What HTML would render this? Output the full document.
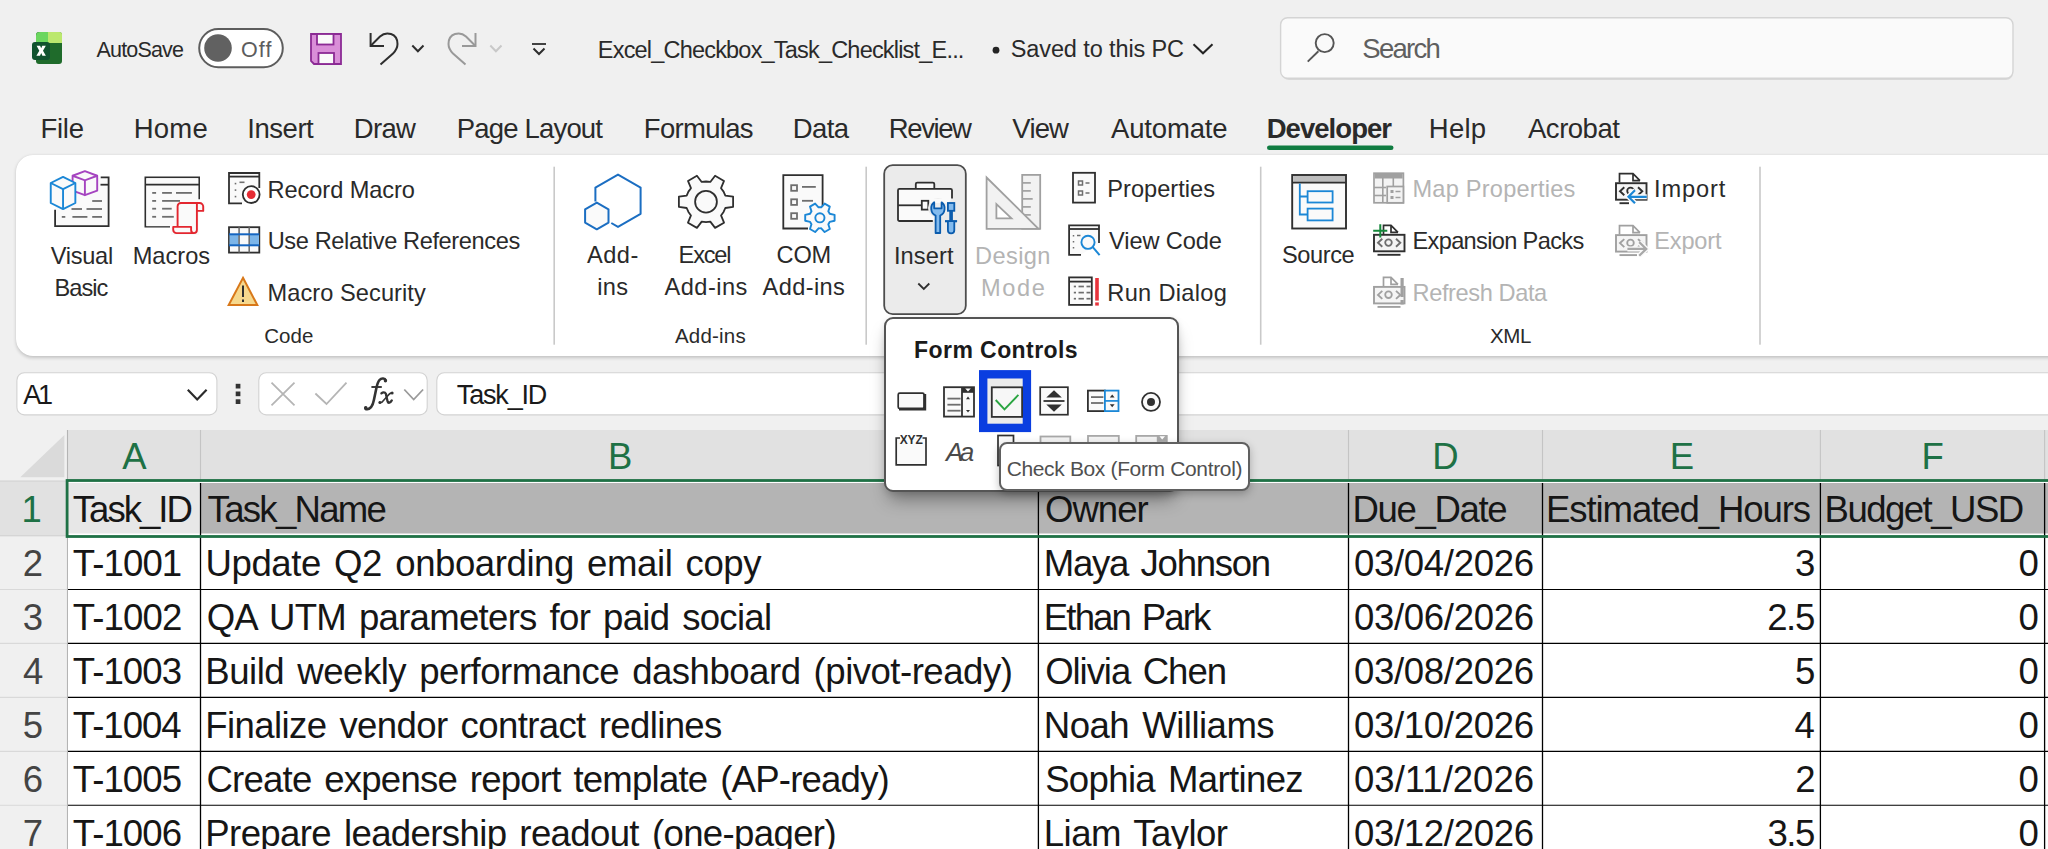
<!DOCTYPE html><html><head><meta charset="utf-8"><style>
html,body{margin:0;padding:0;width:2048px;height:849px;overflow:hidden;background:#f0f0f0;}
.t{position:absolute;white-space:nowrap;}
.a{position:absolute;}
svg{position:absolute;left:0;top:0;}
</style></head><body>
<svg width="2048" height="849" viewBox="0 0 2048 849"><rect x="67.4" y="430" width="2000" height="51" fill="#e1e1e1"/><polygon points="64.4,435 64.4,477.3 20.3,477.3" fill="#dadada"/><rect x="0" y="481" width="67.4" height="55" fill="#e1e1e1"/><line x1="0" y1="589.5" x2="67" y2="589.5" stroke="#d9d9d9" stroke-width="1.1"/><line x1="0" y1="643.4" x2="67" y2="643.4" stroke="#d9d9d9" stroke-width="1.1"/><line x1="0" y1="697.4" x2="67" y2="697.4" stroke="#d9d9d9" stroke-width="1.1"/><line x1="0" y1="751.4" x2="67" y2="751.4" stroke="#d9d9d9" stroke-width="1.1"/><line x1="0" y1="805.3" x2="67" y2="805.3" stroke="#d9d9d9" stroke-width="1.1"/><line x1="0" y1="481" x2="67" y2="481" stroke="#d0d0d0" stroke-width="1"/><line x1="0" y1="535.8" x2="67" y2="535.8" stroke="#d0d0d0" stroke-width="1"/><line x1="67.5" y1="430" x2="67.5" y2="849" stroke="#b4b4b4" stroke-width="1.1"/><rect x="68" y="481" width="1990" height="370" fill="#ffffff"/><rect x="68" y="483" width="131.5" height="50.5" fill="#e7e7e7"/><rect x="201" y="483" width="1900" height="50.5" fill="#b4b4b4"/><line x1="200.5" y1="430" x2="200.5" y2="480" stroke="#c4c4c4" stroke-width="1.1"/><line x1="1038.4" y1="430" x2="1038.4" y2="480" stroke="#c4c4c4" stroke-width="1.1"/><line x1="1348.5" y1="430" x2="1348.5" y2="480" stroke="#c4c4c4" stroke-width="1.1"/><line x1="1542.5" y1="430" x2="1542.5" y2="480" stroke="#c4c4c4" stroke-width="1.1"/><line x1="1820.4" y1="430" x2="1820.4" y2="480" stroke="#c4c4c4" stroke-width="1.1"/><line x1="2044.6" y1="430" x2="2044.6" y2="480" stroke="#c4c4c4" stroke-width="1.1"/><line x1="200.5" y1="483" x2="200.5" y2="849" stroke="#000" stroke-width="1.3"/><line x1="1038.4" y1="483" x2="1038.4" y2="849" stroke="#000" stroke-width="1.3"/><line x1="1348.5" y1="483" x2="1348.5" y2="849" stroke="#000" stroke-width="1.3"/><line x1="1542.5" y1="483" x2="1542.5" y2="849" stroke="#000" stroke-width="1.3"/><line x1="1820.4" y1="483" x2="1820.4" y2="849" stroke="#000" stroke-width="1.3"/><line x1="2044.6" y1="483" x2="2044.6" y2="849" stroke="#000" stroke-width="1.3"/><line x1="68" y1="589.5" x2="2048" y2="589.5" stroke="#000" stroke-width="1.1"/><line x1="68" y1="643.4" x2="2048" y2="643.4" stroke="#000" stroke-width="1.1"/><line x1="68" y1="697.4" x2="2048" y2="697.4" stroke="#000" stroke-width="1.1"/><line x1="68" y1="751.4" x2="2048" y2="751.4" stroke="#000" stroke-width="1.1"/><line x1="68" y1="805.3" x2="2048" y2="805.3" stroke="#000" stroke-width="1.1"/><rect x="67.1" y="480.5" width="2000" height="56" fill="none" stroke="#1e7145" stroke-width="2.8"/></svg>
<div class="t" style="left:122.36px;top:438.70px;font-size:36.50px;line-height:36.50px;letter-spacing:0.000px;color:#1e7145;font-weight:normal;font-style:normal;font-family:'Liberation Sans', sans-serif;word-spacing:0.00px;">A</div>
<div class="t" style="left:607.92px;top:438.70px;font-size:36.50px;line-height:36.50px;letter-spacing:0.000px;color:#1e7145;font-weight:normal;font-style:normal;font-family:'Liberation Sans', sans-serif;word-spacing:0.00px;">B</div>
<div class="t" style="left:1180.09px;top:438.70px;font-size:36.50px;line-height:36.50px;letter-spacing:0.000px;color:#1e7145;font-weight:normal;font-style:normal;font-family:'Liberation Sans', sans-serif;word-spacing:0.00px;">C</div>
<div class="t" style="left:1432.22px;top:438.70px;font-size:36.50px;line-height:36.50px;letter-spacing:0.000px;color:#1e7145;font-weight:normal;font-style:normal;font-family:'Liberation Sans', sans-serif;word-spacing:0.00px;">D</div>
<div class="t" style="left:1669.63px;top:438.70px;font-size:36.50px;line-height:36.50px;letter-spacing:0.000px;color:#1e7145;font-weight:normal;font-style:normal;font-family:'Liberation Sans', sans-serif;word-spacing:0.00px;">E</div>
<div class="t" style="left:1921.44px;top:438.70px;font-size:36.50px;line-height:36.50px;letter-spacing:0.000px;color:#1e7145;font-weight:normal;font-style:normal;font-family:'Liberation Sans', sans-serif;word-spacing:0.00px;">F</div>
<div class="t" style="left:21.42px;top:492.40px;font-size:36.50px;line-height:36.50px;letter-spacing:0.000px;color:#1e7145;font-weight:normal;font-style:normal;font-family:'Liberation Sans', sans-serif;word-spacing:0.00px;">1</div>
<div class="t" style="left:22.87px;top:546.10px;font-size:36.50px;line-height:36.50px;letter-spacing:0.000px;color:#444444;font-weight:normal;font-style:normal;font-family:'Liberation Sans', sans-serif;word-spacing:0.00px;">2</div>
<div class="t" style="left:22.87px;top:600.06px;font-size:36.50px;line-height:36.50px;letter-spacing:0.000px;color:#444444;font-weight:normal;font-style:normal;font-family:'Liberation Sans', sans-serif;word-spacing:0.00px;">3</div>
<div class="t" style="left:23.05px;top:654.02px;font-size:36.50px;line-height:36.50px;letter-spacing:0.000px;color:#444444;font-weight:normal;font-style:normal;font-family:'Liberation Sans', sans-serif;word-spacing:0.00px;">4</div>
<div class="t" style="left:22.87px;top:707.98px;font-size:36.50px;line-height:36.50px;letter-spacing:0.000px;color:#444444;font-weight:normal;font-style:normal;font-family:'Liberation Sans', sans-serif;word-spacing:0.00px;">5</div>
<div class="t" style="left:22.69px;top:761.94px;font-size:36.50px;line-height:36.50px;letter-spacing:0.000px;color:#444444;font-weight:normal;font-style:normal;font-family:'Liberation Sans', sans-serif;word-spacing:0.00px;">6</div>
<div class="t" style="left:22.87px;top:815.90px;font-size:36.50px;line-height:36.50px;letter-spacing:0.000px;color:#444444;font-weight:normal;font-style:normal;font-family:'Liberation Sans', sans-serif;word-spacing:0.00px;">7</div>
<div class="t" style="left:72.87px;top:492.32px;font-size:36.60px;line-height:36.60px;letter-spacing:-2.025px;color:#161616;font-weight:normal;font-style:normal;font-family:'Liberation Sans', sans-serif;word-spacing:0.00px;">Task_ID</div>
<div class="t" style="left:207.57px;top:492.32px;font-size:36.60px;line-height:36.60px;letter-spacing:-1.721px;color:#161616;font-weight:normal;font-style:normal;font-family:'Liberation Sans', sans-serif;word-spacing:0.00px;">Task_Name</div>
<div class="t" style="left:1044.95px;top:492.32px;font-size:36.60px;line-height:36.60px;letter-spacing:-1.002px;color:#161616;font-weight:normal;font-style:normal;font-family:'Liberation Sans', sans-serif;word-spacing:0.00px;">Owner</div>
<div class="t" style="left:1352.57px;top:492.32px;font-size:36.60px;line-height:36.60px;letter-spacing:-1.375px;color:#161616;font-weight:normal;font-style:normal;font-family:'Liberation Sans', sans-serif;word-spacing:0.00px;">Due_Date</div>
<div class="t" style="left:1546.07px;top:492.32px;font-size:36.60px;line-height:36.60px;letter-spacing:-1.115px;color:#161616;font-weight:normal;font-style:normal;font-family:'Liberation Sans', sans-serif;word-spacing:0.00px;">Estimated_Hours</div>
<div class="t" style="left:1824.57px;top:492.32px;font-size:36.60px;line-height:36.60px;letter-spacing:-1.543px;color:#161616;font-weight:normal;font-style:normal;font-family:'Liberation Sans', sans-serif;word-spacing:0.00px;">Budget_USD</div>
<div class="t" style="left:72.87px;top:546.02px;font-size:36.60px;line-height:36.60px;letter-spacing:-0.909px;color:#161616;font-weight:normal;font-style:normal;font-family:'Liberation Sans', sans-serif;word-spacing:0.00px;">T-1001</div>
<div class="t" style="left:205.56px;top:546.02px;font-size:36.60px;line-height:36.60px;letter-spacing:-0.439px;color:#161616;font-weight:normal;font-style:normal;font-family:'Liberation Sans', sans-serif;word-spacing:3.50px;">Update Q2 onboarding email copy</div>
<div class="t" style="left:1043.87px;top:546.02px;font-size:36.60px;line-height:36.60px;letter-spacing:-1.280px;color:#161616;font-weight:normal;font-style:normal;font-family:'Liberation Sans', sans-serif;word-spacing:3.50px;">Maya Johnson</div>
<div class="t" style="left:1354.04px;top:546.02px;font-size:36.60px;line-height:36.60px;letter-spacing:-0.339px;color:#161616;font-weight:normal;font-style:normal;font-family:'Liberation Sans', sans-serif;word-spacing:0.00px;">03/04/2026</div>
<div class="t" style="left:1794.95px;top:546.02px;font-size:36.60px;line-height:36.60px;letter-spacing:0.000px;color:#161616;font-weight:normal;font-style:normal;font-family:'Liberation Sans', sans-serif;word-spacing:0.00px;">3</div>
<div class="t" style="left:2018.47px;top:546.02px;font-size:36.60px;line-height:36.60px;letter-spacing:0.000px;color:#161616;font-weight:normal;font-style:normal;font-family:'Liberation Sans', sans-serif;word-spacing:0.00px;">0</div>
<div class="t" style="left:72.87px;top:599.98px;font-size:36.60px;line-height:36.60px;letter-spacing:-0.873px;color:#161616;font-weight:normal;font-style:normal;font-family:'Liberation Sans', sans-serif;word-spacing:0.00px;">T-1002</div>
<div class="t" style="left:206.65px;top:599.98px;font-size:36.60px;line-height:36.60px;letter-spacing:-0.728px;color:#161616;font-weight:normal;font-style:normal;font-family:'Liberation Sans', sans-serif;word-spacing:3.50px;">QA UTM parameters for paid social</div>
<div class="t" style="left:1043.87px;top:599.98px;font-size:36.60px;line-height:36.60px;letter-spacing:-1.884px;color:#161616;font-weight:normal;font-style:normal;font-family:'Liberation Sans', sans-serif;word-spacing:3.50px;">Ethan Park</div>
<div class="t" style="left:1354.04px;top:599.98px;font-size:36.60px;line-height:36.60px;letter-spacing:-0.339px;color:#161616;font-weight:normal;font-style:normal;font-family:'Liberation Sans', sans-serif;word-spacing:0.00px;">03/06/2026</div>
<div class="t" style="left:1767.17px;top:599.98px;font-size:36.60px;line-height:36.60px;letter-spacing:-1.390px;color:#161616;font-weight:normal;font-style:normal;font-family:'Liberation Sans', sans-serif;word-spacing:0.00px;">2.5</div>
<div class="t" style="left:2018.47px;top:599.98px;font-size:36.60px;line-height:36.60px;letter-spacing:0.000px;color:#161616;font-weight:normal;font-style:normal;font-family:'Liberation Sans', sans-serif;word-spacing:0.00px;">0</div>
<div class="t" style="left:72.87px;top:653.94px;font-size:36.60px;line-height:36.60px;letter-spacing:-0.946px;color:#161616;font-weight:normal;font-style:normal;font-family:'Liberation Sans', sans-serif;word-spacing:0.00px;">T-1003</div>
<div class="t" style="left:205.37px;top:653.94px;font-size:36.60px;line-height:36.60px;letter-spacing:-0.507px;color:#161616;font-weight:normal;font-style:normal;font-family:'Liberation Sans', sans-serif;word-spacing:3.50px;">Build weekly performance dashboard (pivot-ready)</div>
<div class="t" style="left:1045.15px;top:653.94px;font-size:36.60px;line-height:36.60px;letter-spacing:-1.070px;color:#161616;font-weight:normal;font-style:normal;font-family:'Liberation Sans', sans-serif;word-spacing:3.50px;">Olivia Chen</div>
<div class="t" style="left:1354.04px;top:653.94px;font-size:36.60px;line-height:36.60px;letter-spacing:-0.339px;color:#161616;font-weight:normal;font-style:normal;font-family:'Liberation Sans', sans-serif;word-spacing:0.00px;">03/08/2026</div>
<div class="t" style="left:1794.95px;top:653.94px;font-size:36.60px;line-height:36.60px;letter-spacing:0.000px;color:#161616;font-weight:normal;font-style:normal;font-family:'Liberation Sans', sans-serif;word-spacing:0.00px;">5</div>
<div class="t" style="left:2018.47px;top:653.94px;font-size:36.60px;line-height:36.60px;letter-spacing:0.000px;color:#161616;font-weight:normal;font-style:normal;font-family:'Liberation Sans', sans-serif;word-spacing:0.00px;">0</div>
<div class="t" style="left:72.87px;top:707.90px;font-size:36.60px;line-height:36.60px;letter-spacing:-1.019px;color:#161616;font-weight:normal;font-style:normal;font-family:'Liberation Sans', sans-serif;word-spacing:0.00px;">T-1004</div>
<div class="t" style="left:205.37px;top:707.90px;font-size:36.60px;line-height:36.60px;letter-spacing:-0.627px;color:#161616;font-weight:normal;font-style:normal;font-family:'Liberation Sans', sans-serif;word-spacing:3.50px;">Finalize vendor contract redlines</div>
<div class="t" style="left:1043.87px;top:707.90px;font-size:36.60px;line-height:36.60px;letter-spacing:-0.539px;color:#161616;font-weight:normal;font-style:normal;font-family:'Liberation Sans', sans-serif;word-spacing:3.50px;">Noah Williams</div>
<div class="t" style="left:1354.04px;top:707.90px;font-size:36.60px;line-height:36.60px;letter-spacing:-0.339px;color:#161616;font-weight:normal;font-style:normal;font-family:'Liberation Sans', sans-serif;word-spacing:0.00px;">03/10/2026</div>
<div class="t" style="left:1794.59px;top:707.90px;font-size:36.60px;line-height:36.60px;letter-spacing:0.000px;color:#161616;font-weight:normal;font-style:normal;font-family:'Liberation Sans', sans-serif;word-spacing:0.00px;">4</div>
<div class="t" style="left:2018.47px;top:707.90px;font-size:36.60px;line-height:36.60px;letter-spacing:0.000px;color:#161616;font-weight:normal;font-style:normal;font-family:'Liberation Sans', sans-serif;word-spacing:0.00px;">0</div>
<div class="t" style="left:72.87px;top:761.86px;font-size:36.60px;line-height:36.60px;letter-spacing:-0.946px;color:#161616;font-weight:normal;font-style:normal;font-family:'Liberation Sans', sans-serif;word-spacing:0.00px;">T-1005</div>
<div class="t" style="left:206.47px;top:761.86px;font-size:36.60px;line-height:36.60px;letter-spacing:-0.802px;color:#161616;font-weight:normal;font-style:normal;font-family:'Liberation Sans', sans-serif;word-spacing:3.50px;">Create expense report template (AP-ready)</div>
<div class="t" style="left:1045.15px;top:761.86px;font-size:36.60px;line-height:36.60px;letter-spacing:-0.668px;color:#161616;font-weight:normal;font-style:normal;font-family:'Liberation Sans', sans-serif;word-spacing:3.50px;">Sophia Martinez</div>
<div class="t" style="left:1354.04px;top:761.86px;font-size:36.60px;line-height:36.60px;letter-spacing:-0.034px;color:#161616;font-weight:normal;font-style:normal;font-family:'Liberation Sans', sans-serif;word-spacing:0.00px;">03/11/2026</div>
<div class="t" style="left:1795.32px;top:761.86px;font-size:36.60px;line-height:36.60px;letter-spacing:0.000px;color:#161616;font-weight:normal;font-style:normal;font-family:'Liberation Sans', sans-serif;word-spacing:0.00px;">2</div>
<div class="t" style="left:2018.47px;top:761.86px;font-size:36.60px;line-height:36.60px;letter-spacing:0.000px;color:#161616;font-weight:normal;font-style:normal;font-family:'Liberation Sans', sans-serif;word-spacing:0.00px;">0</div>
<div class="t" style="left:72.87px;top:815.82px;font-size:36.60px;line-height:36.60px;letter-spacing:-0.946px;color:#161616;font-weight:normal;font-style:normal;font-family:'Liberation Sans', sans-serif;word-spacing:0.00px;">T-1006</div>
<div class="t" style="left:205.37px;top:815.82px;font-size:36.60px;line-height:36.60px;letter-spacing:-0.645px;color:#161616;font-weight:normal;font-style:normal;font-family:'Liberation Sans', sans-serif;word-spacing:3.50px;">Prepare leadership readout (one-pager)</div>
<div class="t" style="left:1043.87px;top:815.82px;font-size:36.60px;line-height:36.60px;letter-spacing:-0.582px;color:#161616;font-weight:normal;font-style:normal;font-family:'Liberation Sans', sans-serif;word-spacing:3.50px;">Liam Taylor</div>
<div class="t" style="left:1354.04px;top:815.82px;font-size:36.60px;line-height:36.60px;letter-spacing:-0.339px;color:#161616;font-weight:normal;font-style:normal;font-family:'Liberation Sans', sans-serif;word-spacing:0.00px;">03/12/2026</div>
<div class="t" style="left:1767.54px;top:815.82px;font-size:36.60px;line-height:36.60px;letter-spacing:-1.573px;color:#161616;font-weight:normal;font-style:normal;font-family:'Liberation Sans', sans-serif;word-spacing:0.00px;">3.5</div>
<div class="t" style="left:2018.47px;top:815.82px;font-size:36.60px;line-height:36.60px;letter-spacing:0.000px;color:#161616;font-weight:normal;font-style:normal;font-family:'Liberation Sans', sans-serif;word-spacing:0.00px;">0</div>
<svg width="2048" height="849" viewBox="0 0 2048 849"><rect x="16.9" y="372.7" width="200" height="42.2" rx="7.5" fill="#fff" stroke="#d2d2d2" stroke-width="1.1"/><polyline points="187.8,389.8 197.2,399.4 206.6,389.8" fill="none" stroke="#2b2b2b" stroke-width="2.2"/><rect x="235.7" y="383.8" width="4.7" height="4.7" fill="#333"/><rect x="235.7" y="391.5" width="4.7" height="4.7" fill="#333"/><rect x="235.7" y="399.3" width="4.7" height="4.7" fill="#333"/><rect x="258.8" y="372.7" width="168.4" height="42.2" rx="7.5" fill="#fff" stroke="#d2d2d2" stroke-width="1.1"/><path d="M271.5 382.7 L294.5 405.3 M294.5 382.7 L271.5 405.3" stroke="#b5b5b5" stroke-width="1.8" fill="none"/><polyline points="315.4,393.5 326.5,404 346.5,382.6" fill="none" stroke="#b5b5b5" stroke-width="1.8"/><polyline points="404.3,389.5 413.7,399.5 423.1,389.5" fill="none" stroke="#9a9a9a" stroke-width="1.8"/><rect x="436.8" y="372.7" width="1700" height="42.2" rx="7.5" fill="#fff" stroke="#d2d2d2" stroke-width="1.1"/><path d="M385.8 380.4 C385 378.2 381.6 377.6 379.5 380 C377.8 382 377 385 376.3 388.5 L373.9 400 C372.9 405 370.6 409 367.1 409.3 C365.9 409.4 365.1 408.8 365.4 407.8" fill="none" stroke="#333" stroke-width="2.6" stroke-linecap="round"/><circle cx="385.4" cy="380.8" r="1.7" fill="#333"/><circle cx="365.8" cy="407.7" r="1.7" fill="#333"/><line x1="371.4" y1="387" x2="381.8" y2="387" stroke="#333" stroke-width="1.9"/><path d="M381.4 393.4 C382.8 392 385 391.8 385.8 393.6 L387.6 401.4 C388.2 403.6 390.2 403 391.8 400.4" fill="none" stroke="#333" stroke-width="2.3" stroke-linecap="round"/><path d="M392.3 392.9 C390.6 392.4 389 394 386.6 397 L382.6 401.4 C381.6 402.7 380.2 403 379.7 402.1" fill="none" stroke="#333" stroke-width="1.6" stroke-linecap="round"/><circle cx="392.1" cy="393.1" r="1.5" fill="#333"/><circle cx="379.9" cy="402.4" r="1.5" fill="#333"/></svg>
<div class="t" style="left:23.20px;top:381.74px;font-size:27.00px;line-height:27.00px;letter-spacing:-3.225px;color:#1a1a1a;font-weight:normal;font-style:normal;font-family:'Liberation Sans', sans-serif;word-spacing:0.00px;">A1</div>
<div class="t" style="left:456.86px;top:381.94px;font-size:27.00px;line-height:27.00px;letter-spacing:-1.186px;color:#1a1a1a;font-weight:normal;font-style:normal;font-family:'Liberation Sans', sans-serif;word-spacing:0.00px;">Task_ID</div>
<svg width="2048" height="849" viewBox="0 0 2048 849"><rect x="36" y="32" width="26" height="32" rx="3" fill="#1f6b2b"/><path d="M40 32 H48 V43 H36 V36 A4 4 0 0 1 40 32 Z" fill="#6bd65f"/><path d="M48 32 H59.5 A2.5 2.5 0 0 1 62 34.5 V43 H48 Z" fill="#bbe86e"/><rect x="32" y="42" width="18" height="18" rx="3" fill="#10532f"/><path d="M36.6 45.8 H40.1 L41.2 48.3 L42.3 45.8 H45.8 L43 50.7 L45.9 55.8 H42.4 L41.2 53 L40 55.8 H36.4 L39.3 50.7 Z" fill="#fff"/><rect x="199.2" y="29" width="83.6" height="38.2" rx="19.1" fill="#fff" stroke="#5d5d5d" stroke-width="2"/><circle cx="218" cy="48" r="13.8" fill="#616161"/><path d="M311 34 H341 V64 H314 L311 61 Z" fill="#d98ed8" stroke="#8b2a94" stroke-width="1.8"/><rect x="317" y="34" width="16.5" height="10.5" fill="#fafafa" stroke="#8b2a94" stroke-width="1.8"/><rect x="318.5" y="53" width="15.5" height="11" fill="#fafafa" stroke="#8b2a94" stroke-width="1.8"/><path d="M370.6 33 V46 H384" fill="none" stroke="#2e2e2e" stroke-width="2"/><path d="M371 45.5 L380 36.5 C386 31 397.5 33 397.5 44 C397.5 48 396 50.5 393 53.5 L380.5 64.5" fill="none" stroke="#2e2e2e" stroke-width="2"/><polyline points="412.3,45.5 417.9,51.2 423.5,45.5" fill="none" stroke="#2e2e2e" stroke-width="2"/><path d="M475.5 33 V46 H462" fill="none" stroke="#999" stroke-width="2"/><path d="M475 45.5 L466 36.5 C460 31 448.5 33 448.5 44 C448.5 48 450 50.5 453 53.5 L465.5 64.5" fill="none" stroke="#999" stroke-width="2"/><polyline points="490.3,45.5 495.9,51.2 501.5,45.5" fill="none" stroke="#c8c8c8" stroke-width="2"/><line x1="532" y1="44" x2="546" y2="44" stroke="#2e2e2e" stroke-width="1.8"/><polyline points="533.5,48.5 539,54 544.5,48.5" fill="none" stroke="#2e2e2e" stroke-width="2"/><circle cx="996" cy="50.2" r="3.4" fill="#242424"/><polyline points="1193.5,44.2 1203,53.3 1212.5,44.2" fill="none" stroke="#242424" stroke-width="2"/><rect x="1282" y="19.5" width="731" height="60.5" rx="7" fill="#d2d2d2" opacity="0.8"/><rect x="1280.6" y="17.8" width="732.4" height="60.4" rx="7" fill="#fafafa" stroke="#d4d4d4" stroke-width="1.4"/><circle cx="1324.7" cy="43.1" r="9" fill="none" stroke="#555" stroke-width="1.9"/><line x1="1318.4" y1="51.2" x2="1307.7" y2="61.6" stroke="#555" stroke-width="1.9"/><rect x="1267" y="145.4" width="126.5" height="4.6" rx="2.3" fill="#107c41"/></svg>
<div class="t" style="left:96.60px;top:39.70px;font-size:21.50px;line-height:21.50px;letter-spacing:-0.834px;color:#2a2a2a;font-weight:normal;font-style:normal;font-family:'Liberation Sans', sans-serif;word-spacing:0.00px;">AutoSave</div>
<div class="t" style="left:241.03px;top:39.70px;font-size:21.50px;line-height:21.50px;letter-spacing:1.094px;color:#5d5d5d;font-weight:normal;font-style:normal;font-family:'Liberation Sans', sans-serif;word-spacing:0.00px;">Off</div>
<div class="t" style="left:597.82px;top:38.71px;font-size:23.50px;line-height:23.50px;letter-spacing:-0.805px;color:#2a2a2a;font-weight:normal;font-style:normal;font-family:'Liberation Sans', sans-serif;word-spacing:0.00px;">Excel_Checkbox_Task_Checklist_E...</div>
<div class="t" style="left:1010.74px;top:38.31px;font-size:23.50px;line-height:23.50px;letter-spacing:-0.112px;color:#2a2a2a;font-weight:normal;font-style:normal;font-family:'Liberation Sans', sans-serif;word-spacing:0.00px;">Saved to this PC</div>
<div class="t" style="left:1362.26px;top:35.12px;font-size:27.50px;line-height:27.50px;letter-spacing:-1.703px;color:#5f5f5f;font-weight:normal;font-style:normal;font-family:'Liberation Sans', sans-serif;word-spacing:0.00px;">Search</div>
<div class="t" style="left:40.40px;top:114.72px;font-size:27.50px;line-height:27.50px;letter-spacing:-0.246px;color:#2a2a2a;font-weight:normal;font-style:normal;font-family:'Liberation Sans', sans-serif;word-spacing:0.00px;">File</div>
<div class="t" style="left:133.80px;top:114.72px;font-size:27.50px;line-height:27.50px;letter-spacing:0.183px;color:#2a2a2a;font-weight:normal;font-style:normal;font-family:'Liberation Sans', sans-serif;word-spacing:0.00px;">Home</div>
<div class="t" style="left:247.22px;top:114.72px;font-size:27.50px;line-height:27.50px;letter-spacing:-0.447px;color:#2a2a2a;font-weight:normal;font-style:normal;font-family:'Liberation Sans', sans-serif;word-spacing:0.00px;">Insert</div>
<div class="t" style="left:353.80px;top:114.72px;font-size:27.50px;line-height:27.50px;letter-spacing:-0.671px;color:#2a2a2a;font-weight:normal;font-style:normal;font-family:'Liberation Sans', sans-serif;word-spacing:0.00px;">Draw</div>
<div class="t" style="left:456.80px;top:114.72px;font-size:27.50px;line-height:27.50px;letter-spacing:-0.828px;color:#2a2a2a;font-weight:normal;font-style:normal;font-family:'Liberation Sans', sans-serif;word-spacing:0.00px;">Page Layout</div>
<div class="t" style="left:643.80px;top:114.72px;font-size:27.50px;line-height:27.50px;letter-spacing:-0.687px;color:#2a2a2a;font-weight:normal;font-style:normal;font-family:'Liberation Sans', sans-serif;word-spacing:0.00px;">Formulas</div>
<div class="t" style="left:792.80px;top:114.72px;font-size:27.50px;line-height:27.50px;letter-spacing:-0.608px;color:#2a2a2a;font-weight:normal;font-style:normal;font-family:'Liberation Sans', sans-serif;word-spacing:0.00px;">Data</div>
<div class="t" style="left:888.80px;top:114.72px;font-size:27.50px;line-height:27.50px;letter-spacing:-1.400px;color:#2a2a2a;font-weight:normal;font-style:normal;font-family:'Liberation Sans', sans-serif;word-spacing:0.00px;">Review</div>
<div class="t" style="left:1012.36px;top:114.72px;font-size:27.50px;line-height:27.50px;letter-spacing:-0.829px;color:#2a2a2a;font-weight:normal;font-style:normal;font-family:'Liberation Sans', sans-serif;word-spacing:0.00px;">View</div>
<div class="t" style="left:1111.00px;top:114.72px;font-size:27.50px;line-height:27.50px;letter-spacing:-0.166px;color:#2a2a2a;font-weight:normal;font-style:normal;font-family:'Liberation Sans', sans-serif;word-spacing:0.00px;">Automate</div>
<div class="t" style="left:1428.80px;top:114.72px;font-size:27.50px;line-height:27.50px;letter-spacing:0.263px;color:#2a2a2a;font-weight:normal;font-style:normal;font-family:'Liberation Sans', sans-serif;word-spacing:0.00px;">Help</div>
<div class="t" style="left:1528.00px;top:114.72px;font-size:27.50px;line-height:27.50px;letter-spacing:-0.483px;color:#2a2a2a;font-weight:normal;font-style:normal;font-family:'Liberation Sans', sans-serif;word-spacing:0.00px;">Acrobat</div>
<div class="t" style="left:1266.71px;top:114.72px;font-size:27.50px;line-height:27.50px;letter-spacing:-0.958px;color:#2a2a2a;font-weight:bold;font-style:normal;font-family:'Liberation Sans', sans-serif;word-spacing:0.00px;">Developer</div>
<div class="a" style="left:16px;top:155.4px;width:2100px;height:200.9px;background:#fff;border-radius:17px;box-shadow:0 1.5px 3.5px rgba(0,0,0,0.18),0 0 1px rgba(0,0,0,0.08);"></div>
<svg width="2048" height="849" viewBox="0 0 2048 849"><rect x="553.4000000000001" y="166.7" width="1.6" height="178" fill="#c9c9c9"/><rect x="865.4000000000001" y="166.7" width="1.6" height="178" fill="#c9c9c9"/><rect x="1259.9" y="166.7" width="1.6" height="178" fill="#c9c9c9"/><rect x="1759.2" y="166.7" width="1.6" height="178" fill="#c9c9c9"/><rect x="55.5" y="178" width="52.5" height="48" fill="#fafafa"/><path d="M100.7 177.3 H108.6 V226.2 H55.1 V209.8" fill="none" stroke="#2f2f2f" stroke-width="1.8"/><line x1="100.5" y1="184.7" x2="108.6" y2="184.7" stroke="#2f2f2f" stroke-width="1.8"/><line x1="92.2" y1="201" x2="102" y2="201" stroke="#6e6e6e" stroke-width="1.8"/><line x1="71.5" y1="209" x2="82" y2="209" stroke="#6e6e6e" stroke-width="1.8"/><line x1="86.5" y1="209" x2="102" y2="209" stroke="#6e6e6e" stroke-width="1.8"/><line x1="61.8" y1="216.9" x2="65.3" y2="216.9" stroke="#6e6e6e" stroke-width="1.8"/><line x1="72.4" y1="216.9" x2="87.4" y2="216.9" stroke="#6e6e6e" stroke-width="1.8"/><line x1="92.2" y1="216.9" x2="102" y2="216.9" stroke="#6e6e6e" stroke-width="1.8"/><polygon points="84.9,171.2 97.2,175.76 97.2,190.64 84.9,195.2 72.60000000000001,190.64 72.60000000000001,175.76" fill="#fafafa" stroke="#a544c0" stroke-width="1.9" stroke-linejoin="round"/><polyline points="72.60000000000001,175.76 84.9,180.32 97.2,175.76" fill="none" stroke="#a544c0" stroke-width="1.9"/><line x1="84.9" y1="180.32" x2="84.9" y2="195.2" stroke="#a544c0" stroke-width="1.9"/><polygon points="63.05,176.9 75.35,183.018 75.35,202.98200000000003 63.05,209.10000000000002 50.75,202.98200000000003 50.75,183.018" fill="#fafafa" stroke="#1b87d6" stroke-width="1.9" stroke-linejoin="round"/><polyline points="50.75,183.018 63.05,189.136 75.35,183.018" fill="none" stroke="#1b87d6" stroke-width="1.9"/><line x1="63.05" y1="189.136" x2="63.05" y2="209.10000000000002" stroke="#1b87d6" stroke-width="1.9"/><path d="M170 226.6 H145.4 V177.3 H199.1 V199.3" fill="#fafafa" stroke="#2f2f2f" stroke-width="1.8"/><rect x="146.3" y="178.2" width="52" height="48" fill="#fafafa"/><line x1="145.4" y1="184.7" x2="199.1" y2="184.7" stroke="#2f2f2f" stroke-width="1.8"/><line x1="152.2" y1="192.9" x2="156.1" y2="192.9" stroke="#6e6e6e" stroke-width="1.8"/><line x1="162.1" y1="192.9" x2="171.9" y2="192.9" stroke="#6e6e6e" stroke-width="1.8"/><line x1="176" y1="192.9" x2="191.9" y2="192.9" stroke="#6e6e6e" stroke-width="1.8"/><line x1="152.2" y1="200.9" x2="156.1" y2="200.9" stroke="#6e6e6e" stroke-width="1.8"/><line x1="162.1" y1="200.9" x2="180" y2="200.9" stroke="#6e6e6e" stroke-width="1.8"/><line x1="152.2" y1="208.7" x2="156.1" y2="208.7" stroke="#6e6e6e" stroke-width="1.8"/><line x1="162.1" y1="208.7" x2="171.7" y2="208.7" stroke="#6e6e6e" stroke-width="1.8"/><line x1="152.2" y1="216.8" x2="156.1" y2="216.8" stroke="#6e6e6e" stroke-width="1.8"/><line x1="162.1" y1="216.8" x2="173.8" y2="216.8" stroke="#6e6e6e" stroke-width="1.8"/><path d="M175 202 H205 V212 H199 V235 H171 V225 H175 Z" fill="#fafafa"/><path d="M177.6 226.9 V206.3 A3.3 3.3 0 0 1 180.9 203 H199.6 A3.6 3.6 0 0 1 203.2 206.6 V210.9 H196.9" fill="none" stroke="#e3262f" stroke-width="1.9" stroke-linejoin="round"/><path d="M196.9 203.3 V230.1 A3 3 0 0 1 193.9 233.1 H176.5 A3.3 3.3 0 0 1 173.2 229.8 V226.9 H191.1 V230.1 A3 3 0 0 0 193.9 233.1" fill="none" stroke="#e3262f" stroke-width="1.9" stroke-linejoin="round"/><path d="M242 203.4 H229 V173 H259.3 V188" fill="#fafafa" stroke="#2f2f2f" stroke-width="1.8"/><line x1="229" y1="176.6" x2="259.3" y2="176.6" stroke="#2f2f2f" stroke-width="1.8"/><line x1="235.5" y1="182.8" x2="235.5" y2="184.4" stroke="#6e6e6e" stroke-width="1.6"/><line x1="235.5" y1="189.3" x2="235.5" y2="190.9" stroke="#6e6e6e" stroke-width="1.6"/><line x1="235.5" y1="195.8" x2="235.5" y2="197.4" stroke="#6e6e6e" stroke-width="1.6"/><line x1="239.5" y1="182.3" x2="244.5" y2="182.3" stroke="#6e6e6e" stroke-width="1.6"/><circle cx="251.2" cy="194.6" r="8.4" fill="#fff" stroke="#2f2f2f" stroke-width="1.8"/><circle cx="251.2" cy="194.6" r="4.4" fill="#e52b33"/><rect x="229" y="227.2" width="30.3" height="25.4" fill="#fafafa" stroke="#2f2f2f" stroke-width="1.8"/><rect x="229.5" y="234.3" width="9.3" height="11" fill="#7cb5e8"/><rect x="249.4" y="234.3" width="9.6" height="11" fill="#7cb5e8"/><line x1="239.1" y1="227.2" x2="239.1" y2="252.6" stroke="#6e6e6e" stroke-width="1.6"/><line x1="249.2" y1="227.2" x2="249.2" y2="252.6" stroke="#6e6e6e" stroke-width="1.6"/><line x1="229" y1="234.3" x2="259.3" y2="234.3" stroke="#1565c0" stroke-width="2"/><line x1="229" y1="245.3" x2="259.3" y2="245.3" stroke="#1565c0" stroke-width="2"/><polygon points="243,277.8 257.3,305 228.7,305" fill="#f6d88d" stroke="#d8781a" stroke-width="2" stroke-linejoin="miter"/><line x1="243" y1="285.5" x2="243" y2="297" stroke="#2f2f2f" stroke-width="2"/><line x1="243" y1="299.5" x2="243" y2="302" stroke="#2f2f2f" stroke-width="2"/><path d="M595.4 201.5 V187.6 L618 174.6 L640.6 187.6 V213.8 L618 226.9 L611.3 223" fill="none" stroke="#1b6ec2" stroke-width="2" stroke-linejoin="round"/><polygon points="596.8,202.6 608.5,209.3 608.5,222.6 596.8,229.3 585.1,222.6 585.1,209.3" fill="#fafafa" stroke="#1b6ec2" stroke-width="2" stroke-linejoin="round"/><polygon points="723.58,191.65 725.33,195.60 733.11,196.63 733.11,206.97 725.33,208.00 723.58,211.95 721.03,215.44 724.03,222.69 715.08,227.86 710.30,221.64 706.00,222.10 701.70,221.64 696.92,227.86 687.97,222.69 690.97,215.44 688.42,211.95 686.67,208.00 678.89,206.97 678.89,196.63 686.67,195.60 688.42,191.65 690.97,188.16 687.97,180.91 696.92,175.74 701.70,181.96 706.00,181.50 710.30,181.96 715.08,175.74 724.03,180.91 721.03,188.16" fill="#fafafa" stroke="#2f2f2f" stroke-width="1.8" stroke-linejoin="round"/><circle cx="706" cy="201.7" r="10.9" fill="none" stroke="#2f2f2f" stroke-width="1.8"/><path d="M808 228.5 H783.3 V175.2 H822.6 V211" fill="#fafafa" stroke="#2f2f2f" stroke-width="1.8"/><rect x="791.2" y="185.20000000000002" width="5.8" height="5.6" fill="none" stroke="#6e6e6e" stroke-width="1.8"/><rect x="791.2" y="199.3" width="5.8" height="5.6" fill="none" stroke="#6e6e6e" stroke-width="1.8"/><rect x="791.2" y="213.20000000000002" width="5.8" height="5.6" fill="none" stroke="#6e6e6e" stroke-width="1.8"/><line x1="802" y1="186.9" x2="815.8" y2="186.9" stroke="#6e6e6e" stroke-width="1.8"/><line x1="802" y1="200.8" x2="813" y2="200.8" stroke="#6e6e6e" stroke-width="1.8"/><polygon points="829.08,212.50 829.68,213.71 834.60,214.82 834.60,220.78 829.68,221.89 829.08,223.10 828.33,224.22 829.83,229.04 824.67,232.02 821.25,228.31 819.90,228.40 818.55,228.31 815.13,232.02 809.97,229.04 811.47,224.22 810.72,223.10 810.12,221.89 805.20,220.78 805.20,214.82 810.12,213.71 810.72,212.50 811.47,211.38 809.97,206.56 815.13,203.58 818.55,207.29 819.90,207.20 821.25,207.29 824.67,203.58 829.83,206.56 828.33,211.38" fill="#fafafa" stroke="#1b87d6" stroke-width="1.9" stroke-linejoin="round"/><circle cx="819.9" cy="217.8" r="4.6" fill="none" stroke="#1b87d6" stroke-width="1.9"/><rect x="884.2" y="165.2" width="81.6" height="149" rx="8.5" fill="#ebebeb" stroke="#4d4d4d" stroke-width="1.8"/><rect x="915.8" y="182.6" width="18.5" height="7" rx="1.5" fill="#fafafa" stroke="#2f2f2f" stroke-width="1.8"/><path d="M932.8 221 H899.5 A1.5 1.5 0 0 1 898 219.5 V190.3 A1.5 1.5 0 0 1 899.5 188.8 H950.5 A1.5 1.5 0 0 1 952 190.3 V198.6" fill="#fafafa" stroke="#2f2f2f" stroke-width="1.8"/><line x1="898" y1="205.3" x2="921.8" y2="205.3" stroke="#2f2f2f" stroke-width="1.8"/><rect x="921.8" y="200.8" width="6.5" height="8.8" fill="#fafafa" stroke="#2f2f2f" stroke-width="1.8"/><circle cx="938" cy="208" r="10" fill="#eeeeee"/><rect x="930" y="199" width="16" height="4" fill="#fafafa"/><path d="M935.6 233 V215.5 C930.5 213.5 929.6 205.5 934.2 202.3 V208.3 H941.6 V202.3 C946.2 205.5 945.3 213.5 940.2 215.5 V233 Z" fill="#83bbee" stroke="#0b5cad" stroke-width="1.8" stroke-linejoin="round"/><rect x="947.9" y="203" width="6.4" height="7.8" fill="#83bbee" stroke="#0b5cad" stroke-width="1.8"/><rect x="949.3" y="210.8" width="3.6" height="10" fill="#0b5cad"/><line x1="945" y1="221.2" x2="957.1" y2="221.2" stroke="#0b5cad" stroke-width="2.2"/><path d="M947.9 222 V230.2 A3.2 3.2 0 0 0 954.3 230.2 V222" fill="#83bbee" stroke="#0b5cad" stroke-width="1.8"/><polyline points="918.3,283.5 923.8,289 929.3,283.5" fill="none" stroke="#2f2f2f" stroke-width="1.8"/><rect x="1022.2" y="174.9" width="18" height="53.8" fill="#f2f2f2" stroke="#a0a0a0" stroke-width="1.8"/><line x1="1022.2" y1="182.9" x2="1030.8" y2="182.9" stroke="#a0a0a0" stroke-width="1.7"/><line x1="1022.2" y1="190.9" x2="1030.8" y2="190.9" stroke="#a0a0a0" stroke-width="1.7"/><line x1="1022.2" y1="198.9" x2="1032.7" y2="198.9" stroke="#a0a0a0" stroke-width="1.7"/><line x1="1022.2" y1="206.9" x2="1030.8" y2="206.9" stroke="#a0a0a0" stroke-width="1.7"/><line x1="1022.2" y1="214.9" x2="1030.8" y2="214.9" stroke="#a0a0a0" stroke-width="1.7"/><polygon points="986.6,177.5 986.6,228.8 1038.5,228.8" fill="#f2f2f2" stroke="#a0a0a0" stroke-width="1.8" stroke-linejoin="miter"/><polygon points="996.4,204 996.4,218.4 1011.5,218.4" fill="#fff" stroke="#a0a0a0" stroke-width="1.8"/><rect x="1073" y="172.8" width="22" height="29.8" fill="#fafafa" stroke="#2f2f2f" stroke-width="1.8"/><rect x="1078.5" y="181" width="4" height="4" fill="none" stroke="#6e6e6e" stroke-width="1.5"/><rect x="1078.5" y="191" width="4" height="4" fill="none" stroke="#6e6e6e" stroke-width="1.5"/><line x1="1085.5" y1="183" x2="1089.5" y2="183" stroke="#6e6e6e" stroke-width="1.5"/><line x1="1085.5" y1="193" x2="1089.5" y2="193" stroke="#6e6e6e" stroke-width="1.5"/><path d="M1081 254.8 H1069.1 V225.4 H1099 V243" fill="#fafafa" stroke="#2f2f2f" stroke-width="1.8"/><line x1="1069.1" y1="229" x2="1099" y2="229" stroke="#2f2f2f" stroke-width="1.8"/><line x1="1073.5" y1="235" x2="1073.5" y2="236.5" stroke="#6e6e6e" stroke-width="1.5"/><line x1="1073.5" y1="241" x2="1073.5" y2="242.5" stroke="#6e6e6e" stroke-width="1.5"/><line x1="1073.5" y1="247" x2="1073.5" y2="248.5" stroke="#6e6e6e" stroke-width="1.5"/><line x1="1077" y1="235.5" x2="1080.5" y2="235.5" stroke="#6e6e6e" stroke-width="1.5"/><circle cx="1088" cy="242.3" r="6.6" fill="#fafafa" stroke="#1b87d6" stroke-width="1.9"/><line x1="1092.8" y1="247.2" x2="1099.6" y2="255.2" stroke="#1b87d6" stroke-width="2"/><rect x="1069.1" y="277.4" width="22.7" height="27.5" fill="#fafafa" stroke="#2f2f2f" stroke-width="1.8"/><line x1="1069.1" y1="281.6" x2="1091.8" y2="281.6" stroke="#2f2f2f" stroke-width="1.8"/><line x1="1073.8" y1="286.5" x2="1076" y2="286.5" stroke="#6e6e6e" stroke-width="1.7"/><line x1="1078.5" y1="286.5" x2="1083.9" y2="286.5" stroke="#6e6e6e" stroke-width="1.7"/><line x1="1086.5" y1="286.5" x2="1090.5" y2="286.5" stroke="#6e6e6e" stroke-width="1.7"/><line x1="1073.8" y1="292.6" x2="1076" y2="292.6" stroke="#6e6e6e" stroke-width="1.7"/><line x1="1078.5" y1="292.6" x2="1083.9" y2="292.6" stroke="#6e6e6e" stroke-width="1.7"/><line x1="1086.5" y1="292.6" x2="1090.5" y2="292.6" stroke="#6e6e6e" stroke-width="1.7"/><line x1="1073.8" y1="298.7" x2="1076" y2="298.7" stroke="#6e6e6e" stroke-width="1.7"/><line x1="1078.5" y1="298.7" x2="1083.9" y2="298.7" stroke="#6e6e6e" stroke-width="1.7"/><line x1="1086.5" y1="298.7" x2="1090.5" y2="298.7" stroke="#6e6e6e" stroke-width="1.7"/><rect x="1095.2" y="278" width="3.6" height="22.6" fill="#e8343c"/><rect x="1095.2" y="302.4" width="3.6" height="3.2" fill="#e8343c"/><rect x="1292.2" y="175" width="53.8" height="53.5" fill="#fafafa" stroke="#2f2f2f" stroke-width="1.9"/><rect x="1293.2" y="176" width="51.8" height="6.6" fill="#bdbdbd"/><line x1="1292.2" y1="182.6" x2="1346" y2="182.6" stroke="#2f2f2f" stroke-width="1.7"/><path d="M1299.8 183.5 V214.5 H1307.5 M1299.8 196.5 H1307.5" fill="none" stroke="#1b87d6" stroke-width="1.8"/><rect x="1307.6" y="191.2" width="25" height="11.3" fill="#fafafa" stroke="#1b87d6" stroke-width="1.8"/><rect x="1307.6" y="208.6" width="25" height="11.8" fill="#fafafa" stroke="#1b87d6" stroke-width="1.8"/><rect x="1374" y="173.2" width="29.4" height="29.6" fill="#f3f3f3" stroke="#a0a0a0" stroke-width="1.7"/><rect x="1374.8" y="174" width="27.8" height="4.5" fill="#a0a0a0"/><line x1="1382.8" y1="178" x2="1382.8" y2="202.8" stroke="#a0a0a0" stroke-width="1.6"/><line x1="1374" y1="187.5" x2="1386" y2="187.5" stroke="#a0a0a0" stroke-width="1.6"/><line x1="1374" y1="195.5" x2="1386" y2="195.5" stroke="#a0a0a0" stroke-width="1.6"/><line x1="1393.3" y1="178" x2="1393.3" y2="186.5" stroke="#a0a0a0" stroke-width="1.6"/><rect x="1387.2" y="186.5" width="16.2" height="16.3" fill="#f3f3f3" stroke="#a0a0a0" stroke-width="1.7"/><rect x="1390.5" y="190" width="3" height="3" fill="#a0a0a0"/><line x1="1395.5" y1="191.5" x2="1400.5" y2="191.5" stroke="#a0a0a0" stroke-width="1.5"/><rect x="1390.5" y="196" width="3" height="3" fill="#a0a0a0"/><line x1="1395.5" y1="197.5" x2="1400.5" y2="197.5" stroke="#a0a0a0" stroke-width="1.5"/><path d="M1383.5 234.10000000000002 V225.3 H1391 L1398 232.3 M1391 225.3 V232.3 H1398" fill="none" stroke="#2f2f2f" stroke-width="1.7"/><rect x="1374" y="234.8" width="30.5" height="16.5" fill="#f5f5f5" stroke="#2f2f2f" stroke-width="1.9"/><line x1="1377.5" y1="254.8" x2="1400.5" y2="254.8" stroke="#2f2f2f" stroke-width="1.9"/><polyline points="1382.3,238.8 1378,242.8 1382.3,246.8" fill="none" stroke="#6e6e6e" stroke-width="1.9"/><polyline points="1396,238.8 1400.3,242.8 1396,246.8" fill="none" stroke="#6e6e6e" stroke-width="1.9"/><circle cx="1388.5" cy="242.60000000000002" r="3.3" fill="none" stroke="#6e6e6e" stroke-width="1.8"/><path d="M1380.3 224.3 V237.5 M1373.2 230.8 H1387.3" stroke="#16883b" stroke-width="2"/><path d="M1383.5 286.2 V277.4 H1391 L1398 284.4 M1391 277.4 V284.4 H1398" fill="none" stroke="#a0a0a0" stroke-width="1.7"/><rect x="1374" y="286.9" width="30.5" height="16.5" fill="#f5f5f5" stroke="#a0a0a0" stroke-width="1.9"/><line x1="1377.5" y1="306.9" x2="1400.5" y2="306.9" stroke="#a0a0a0" stroke-width="1.9"/><polyline points="1382.3,290.9 1378,294.9 1382.3,298.9" fill="none" stroke="#a0a0a0" stroke-width="1.9"/><polyline points="1396,290.9 1400.3,294.9 1396,298.9" fill="none" stroke="#a0a0a0" stroke-width="1.9"/><circle cx="1388.5" cy="294.7" r="3.3" fill="none" stroke="#a0a0a0" stroke-width="1.8"/><rect x="1400.5" y="278" width="3.2" height="19" fill="#a0a0a0"/><rect x="1400.5" y="300" width="3.2" height="4.5" fill="#a0a0a0"/><path d="M1619.5 182.5 V173.7 H1633 L1640 180.7 M1633 173.7 V180.7 H1640" fill="none" stroke="#2f2f2f" stroke-width="1.7"/><rect x="1616" y="183.2" width="30.5" height="16.5" fill="#f5f5f5" stroke="#2f2f2f" stroke-width="1.9"/><line x1="1619.5" y1="203.2" x2="1629" y2="203.2" stroke="#2f2f2f" stroke-width="1.9"/><polyline points="1624.3,187.2 1620,191.2 1624.3,195.2" fill="none" stroke="#2f2f2f" stroke-width="1.9"/><polyline points="1638,187.2 1642.3,191.2 1638,195.2" fill="none" stroke="#2f2f2f" stroke-width="1.9"/><circle cx="1630.5" cy="191.0" r="3.3" fill="none" stroke="#2f2f2f" stroke-width="1.8"/><path d="M1646.8 196.8 H1628.5 M1635 190.3 L1628.5 196.8 L1635 203.3" fill="none" stroke="#fafafa" stroke-width="5"/><path d="M1646.8 196.8 H1628.5 M1635 190.3 L1628.5 196.8 L1635 203.3" fill="none" stroke="#1b87d6" stroke-width="2.2"/><path d="M1619.5 234.4 V225.6 H1633 L1640 232.6 M1633 225.6 V232.6 H1640" fill="none" stroke="#a0a0a0" stroke-width="1.7"/><rect x="1616" y="235.1" width="30.5" height="16.5" fill="#f5f5f5" stroke="#a0a0a0" stroke-width="1.9"/><line x1="1619.5" y1="255.1" x2="1637" y2="255.1" stroke="#a0a0a0" stroke-width="1.9"/><polyline points="1624.3,239.1 1620,243.1 1624.3,247.1" fill="none" stroke="#a0a0a0" stroke-width="1.9"/><polyline points="1638,239.1 1642.3,243.1 1638,247.1" fill="none" stroke="#a0a0a0" stroke-width="1.9"/><circle cx="1630.5" cy="242.9" r="3.3" fill="none" stroke="#a0a0a0" stroke-width="1.8"/><path d="M1627.4 248.9 H1646.3 M1639.2 242.1 L1646.3 248.9 L1639.2 255.7" fill="none" stroke="#fafafa" stroke-width="5"/><path d="M1627.4 248.9 H1646.3 M1639.2 242.1 L1646.3 248.9 L1639.2 255.7" fill="none" stroke="#a8a8a8" stroke-width="2.2"/></svg>
<div class="t" style="left:50.68px;top:244.52px;font-size:23.60px;line-height:23.60px;letter-spacing:-0.277px;color:#2a2a2a;font-weight:normal;font-style:normal;font-family:'Liberation Sans', sans-serif;word-spacing:0.00px;">Visual</div>
<div class="t" style="left:54.61px;top:276.82px;font-size:23.60px;line-height:23.60px;letter-spacing:-1.006px;color:#2a2a2a;font-weight:normal;font-style:normal;font-family:'Liberation Sans', sans-serif;word-spacing:0.00px;">Basic</div>
<div class="t" style="left:132.71px;top:244.52px;font-size:23.60px;line-height:23.60px;letter-spacing:0.001px;color:#2a2a2a;font-weight:normal;font-style:normal;font-family:'Liberation Sans', sans-serif;word-spacing:0.00px;">Macros</div>
<div class="t" style="left:267.61px;top:178.52px;font-size:23.60px;line-height:23.60px;letter-spacing:-0.080px;color:#2a2a2a;font-weight:normal;font-style:normal;font-family:'Liberation Sans', sans-serif;word-spacing:0.00px;">Record Macro</div>
<div class="t" style="left:267.73px;top:230.32px;font-size:23.60px;line-height:23.60px;letter-spacing:-0.383px;color:#2a2a2a;font-weight:normal;font-style:normal;font-family:'Liberation Sans', sans-serif;word-spacing:0.00px;">Use Relative References</div>
<div class="t" style="left:267.61px;top:282.42px;font-size:23.60px;line-height:23.60px;letter-spacing:0.060px;color:#2a2a2a;font-weight:normal;font-style:normal;font-family:'Liberation Sans', sans-serif;word-spacing:0.00px;">Macro Security</div>
<div class="t" style="left:264.18px;top:326.05px;font-size:20.50px;line-height:20.50px;letter-spacing:0.084px;color:#2a2a2a;font-weight:normal;font-style:normal;font-family:'Liberation Sans', sans-serif;word-spacing:0.00px;">Code</div>
<div class="t" style="left:587.00px;top:244.42px;font-size:23.60px;line-height:23.60px;letter-spacing:0.483px;color:#2a2a2a;font-weight:normal;font-style:normal;font-family:'Liberation Sans', sans-serif;word-spacing:0.00px;">Add-</div>
<div class="t" style="left:597.27px;top:276.22px;font-size:23.60px;line-height:23.60px;letter-spacing:0.276px;color:#2a2a2a;font-weight:normal;font-style:normal;font-family:'Liberation Sans', sans-serif;word-spacing:0.00px;">ins</div>
<div class="t" style="left:678.61px;top:244.42px;font-size:23.60px;line-height:23.60px;letter-spacing:-1.195px;color:#2a2a2a;font-weight:normal;font-style:normal;font-family:'Liberation Sans', sans-serif;word-spacing:0.00px;">Excel</div>
<div class="t" style="left:664.60px;top:276.22px;font-size:23.60px;line-height:23.60px;letter-spacing:0.454px;color:#2a2a2a;font-weight:normal;font-style:normal;font-family:'Liberation Sans', sans-serif;word-spacing:0.00px;">Add-ins</div>
<div class="t" style="left:776.62px;top:244.42px;font-size:23.60px;line-height:23.60px;letter-spacing:-0.210px;color:#2a2a2a;font-weight:normal;font-style:normal;font-family:'Liberation Sans', sans-serif;word-spacing:0.00px;">COM</div>
<div class="t" style="left:762.60px;top:276.22px;font-size:23.60px;line-height:23.60px;letter-spacing:0.370px;color:#2a2a2a;font-weight:normal;font-style:normal;font-family:'Liberation Sans', sans-serif;word-spacing:0.00px;">Add-ins</div>
<div class="t" style="left:674.90px;top:325.85px;font-size:20.50px;line-height:20.50px;letter-spacing:0.220px;color:#2a2a2a;font-weight:normal;font-style:normal;font-family:'Liberation Sans', sans-serif;word-spacing:0.00px;">Add-ins</div>
<div class="t" style="left:893.88px;top:244.52px;font-size:23.60px;line-height:23.60px;letter-spacing:0.148px;color:#2a2a2a;font-weight:normal;font-style:normal;font-family:'Liberation Sans', sans-serif;word-spacing:0.00px;">Insert</div>
<div class="t" style="left:975.11px;top:244.52px;font-size:23.60px;line-height:23.60px;letter-spacing:0.365px;color:#b4b4b4;font-weight:normal;font-style:normal;font-family:'Liberation Sans', sans-serif;word-spacing:0.00px;">Design</div>
<div class="t" style="left:981.11px;top:276.52px;font-size:23.60px;line-height:23.60px;letter-spacing:1.583px;color:#b4b4b4;font-weight:normal;font-style:normal;font-family:'Liberation Sans', sans-serif;word-spacing:0.00px;">Mode</div>
<div class="t" style="left:1107.31px;top:178.42px;font-size:23.60px;line-height:23.60px;letter-spacing:0.022px;color:#2a2a2a;font-weight:normal;font-style:normal;font-family:'Liberation Sans', sans-serif;word-spacing:0.00px;">Properties</div>
<div class="t" style="left:1109.08px;top:229.92px;font-size:23.60px;line-height:23.60px;letter-spacing:-0.119px;color:#2a2a2a;font-weight:normal;font-style:normal;font-family:'Liberation Sans', sans-serif;word-spacing:0.00px;">View Code</div>
<div class="t" style="left:1107.31px;top:281.92px;font-size:23.60px;line-height:23.60px;letter-spacing:0.313px;color:#2a2a2a;font-weight:normal;font-style:normal;font-family:'Liberation Sans', sans-serif;word-spacing:0.00px;">Run Dialog</div>
<div class="t" style="left:1281.94px;top:244.22px;font-size:23.60px;line-height:23.60px;letter-spacing:-0.394px;color:#2a2a2a;font-weight:normal;font-style:normal;font-family:'Liberation Sans', sans-serif;word-spacing:0.00px;">Source</div>
<div class="t" style="left:1412.51px;top:177.82px;font-size:23.60px;line-height:23.60px;letter-spacing:0.216px;color:#b4b4b4;font-weight:normal;font-style:normal;font-family:'Liberation Sans', sans-serif;word-spacing:0.00px;">Map Properties</div>
<div class="t" style="left:1412.51px;top:230.32px;font-size:23.60px;line-height:23.60px;letter-spacing:-0.664px;color:#2a2a2a;font-weight:normal;font-style:normal;font-family:'Liberation Sans', sans-serif;word-spacing:0.00px;">Expansion Packs</div>
<div class="t" style="left:1412.51px;top:282.22px;font-size:23.60px;line-height:23.60px;letter-spacing:-0.392px;color:#b4b4b4;font-weight:normal;font-style:normal;font-family:'Liberation Sans', sans-serif;word-spacing:0.00px;">Refresh Data</div>
<div class="t" style="left:1654.08px;top:178.12px;font-size:23.60px;line-height:23.60px;letter-spacing:0.891px;color:#2a2a2a;font-weight:normal;font-style:normal;font-family:'Liberation Sans', sans-serif;word-spacing:0.00px;">Import</div>
<div class="t" style="left:1654.31px;top:230.22px;font-size:23.60px;line-height:23.60px;letter-spacing:-0.196px;color:#b4b4b4;font-weight:normal;font-style:normal;font-family:'Liberation Sans', sans-serif;word-spacing:0.00px;">Export</div>
<div class="t" style="left:1489.99px;top:325.85px;font-size:20.50px;line-height:20.50px;letter-spacing:-0.350px;color:#2a2a2a;font-weight:normal;font-style:normal;font-family:'Liberation Sans', sans-serif;word-spacing:0.00px;">XML</div>
<div class="a" style="left:883.5px;top:316.5px;width:295.2px;height:175.8px;box-sizing:border-box;background:#fff;border:2px solid #555;border-radius:9px;box-shadow:0 12px 18px -5px rgba(0,0,0,0.38),0 2px 6px rgba(0,0,0,0.10);"></div>
<svg width="2048" height="849" viewBox="0 0 2048 849"><rect x="898.2" y="393.2" width="25.8" height="15.2" rx="1.5" fill="#fafafa" stroke="#303030" stroke-width="1.7"/><path d="M899 409.3 H925 V394" fill="none" stroke="#303030" stroke-width="2.4"/><rect x="944" y="387.2" width="30" height="29.4" fill="#fafafa" stroke="#303030" stroke-width="1.8"/><line x1="962" y1="387.2" x2="962" y2="416.6" stroke="#303030" stroke-width="1.8"/><rect x="962" y="387.2" width="12" height="5.6" fill="#303030"/><polygon points="965.2,388.6 970.8,388.6 968,391.6" fill="#fff"/><line x1="947.4" y1="398.6" x2="960.6" y2="398.6" stroke="#6e6e6e" stroke-width="1.8"/><line x1="947.4" y1="404.7" x2="960.6" y2="404.7" stroke="#6e6e6e" stroke-width="1.8"/><line x1="947.4" y1="410.7" x2="960.6" y2="410.7" stroke="#6e6e6e" stroke-width="1.8"/><polygon points="966,399.3 970,399.3 968,396.6" fill="#303030"/><polygon points="966,409.9 970,409.9 968,412.6" fill="#303030"/><rect x="983.2" y="374.3" width="43.7" height="53.6" fill="#ebebeb" stroke="#0a3ee0" stroke-width="8.4"/><rect x="991.8" y="387.3" width="30.3" height="29.6" fill="#f7f7f7" stroke="#303030" stroke-width="1.8"/><polyline points="995.7,400 1004.5,409.3 1018.4,394.9" fill="none" stroke="#2aa541" stroke-width="1.9"/><rect x="1040.2" y="387.2" width="27.7" height="27.5" fill="#fafafa" stroke="#303030" stroke-width="1.7"/><line x1="1043.5" y1="401" x2="1064.5" y2="401" stroke="#303030" stroke-width="1.8"/><polygon points="1046.3,397.5 1061.8,397.5 1054,390.2" fill="#303030"/><polygon points="1046.3,404.5 1061.8,404.5 1054,411.8" fill="#303030"/><rect x="1087.9" y="390.6" width="17" height="20.5" fill="#fafafa" stroke="#303030" stroke-width="1.8"/><rect x="1104.9" y="390.6" width="13.6" height="20.5" fill="#fafafa" stroke="#1b87d6" stroke-width="1.8"/><line x1="1104.9" y1="400.9" x2="1118.5" y2="400.9" stroke="#1b87d6" stroke-width="1.7"/><line x1="1091" y1="397.1" x2="1103.4" y2="397.1" stroke="#6e6e6e" stroke-width="1.8"/><line x1="1091" y1="403" x2="1103.4" y2="403" stroke="#6e6e6e" stroke-width="1.8"/><polygon points="1109.8,397.6 1114.6,397.6 1112.2,394.6" fill="#303030"/><polygon points="1109.8,404.2 1114.6,404.2 1112.2,407.2" fill="#303030"/><circle cx="1151" cy="401.9" r="9" fill="#fafafa" stroke="#303030" stroke-width="1.8"/><circle cx="1151" cy="401.9" r="4" fill="#303030"/><path d="M900 438 H896.2 V464.8 H926 V438 H922.5" fill="#fafafa" stroke="#303030" stroke-width="1.7"/><rect x="998" y="435.5" width="15.5" height="30" fill="#fafafa" stroke="#303030" stroke-width="1.7"/><rect x="1040.5" y="436.5" width="29.8" height="12" fill="#f4f4f4" stroke="#a8a8a8" stroke-width="1.8"/><rect x="1088" y="435.9" width="30.8" height="12" fill="#f4f4f4" stroke="#a8a8a8" stroke-width="1.8"/><rect x="1136.2" y="435.9" width="30.6" height="12" fill="#f4f4f4" stroke="#a8a8a8" stroke-width="1.8"/><rect x="1156.8" y="435.9" width="10" height="6" fill="#a8a8a8"/><polygon points="1159.5,436.3 1165,436.3 1162.2,439.6" fill="#fff"/></svg>
<div class="t" style="left:914.11px;top:338.73px;font-size:23.00px;line-height:23.00px;letter-spacing:0.420px;color:#1a1a1a;font-weight:bold;font-style:normal;font-family:'Liberation Sans', sans-serif;word-spacing:0.00px;">Form Controls</div>
<div class="t" style="left:899.68px;top:434.04px;font-size:12.00px;line-height:12.00px;letter-spacing:-0.110px;color:#303030;font-weight:bold;font-style:normal;font-family:'Liberation Sans', sans-serif;word-spacing:0.00px;">XYZ</div>
<div class="t" style="left:946.00px;top:438.59px;font-size:26.00px;line-height:26.00px;letter-spacing:-3.510px;color:#4a4a4a;font-weight:normal;font-style:italic;font-family:'Liberation Sans', sans-serif;word-spacing:0.00px;">Aa</div>
<div class="a" style="left:999px;top:442px;width:251px;height:48.5px;box-sizing:border-box;background:#fff;border:2px solid #606060;border-radius:8px;box-shadow:0 3px 8px rgba(0,0,0,0.25);"></div>
<div class="t" style="left:1006.65px;top:457.52px;font-size:21.00px;line-height:21.00px;letter-spacing:-0.352px;color:#505050;font-weight:normal;font-style:normal;font-family:'Liberation Sans', sans-serif;word-spacing:0.00px;">Check Box (Form Control)</div>
</body></html>
